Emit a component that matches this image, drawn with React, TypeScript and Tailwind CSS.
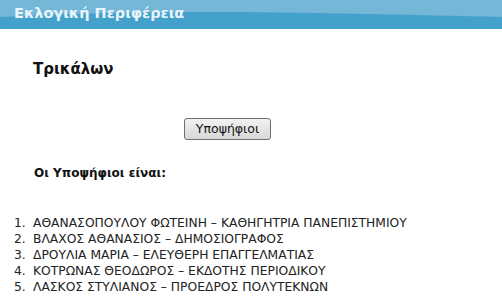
import React from 'react';

const candidates = [
  'ΑΘΑΝΑΣΟΠΟΥΛΟΥ ΦΩΤΕΙΝΗ – ΚΑΘΗΓΗΤΡΙΑ ΠΑΝΕΠΙΣΤΗΜΙΟΥ',
  'ΒΛΑΧΟΣ ΑΘΑΝΑΣΙΟΣ – ΔΗΜΟΣΙΟΓΡΑΦΟΣ',
  'ΔΡΟΥΛΙΑ ΜΑΡΙΑ – ΕΛΕΥΘΕΡΗ ΕΠΑΓΓΕΛΜΑΤΙΑΣ',
  'ΚΟΤΡΩΝΑΣ ΘΕΟΔΩΡΟΣ – ΕΚΔΟΤΗΣ ΠΕΡΙΟΔΙΚΟΥ',
  'ΛΑΣΚΟΣ ΣΤΥΛΙΑΝΟΣ – ΠΡΟΕΔΡΟΣ ΠΟΛΥΤΕΚΝΩΝ',
];

export default function App() {
  return (
    <div className="w-[502px] h-[296px] bg-white overflow-hidden font-['DejaVu_Sans',sans-serif] text-[#222]">
      {/* κεφαλίδα */}
      <div className="relative h-[29px] bg-[#43a1cc]">
        <svg className="absolute inset-0" width="502" height="29" viewBox="0 0 502 29" preserveAspectRatio="none">
          <path d="M0 0 H502 V17 C420 15 300 12 200 12 C120 12 60 14 0 17 Z" fill="#74b7d7" />
        </svg>
        <div className="relative pl-[14px] pt-[3px] text-[14.5px] font-bold text-[#e9f5fa] leading-[20px]">
          Εκλογική Περιφέρεια
        </div>
      </div>

      <div className="pl-[33px] pt-[31px] text-[15px] font-bold text-[#111] leading-[18px]">Τρικάλων</div>

      <div className="flex pt-[40px] pl-[184px]">
        <button className="w-[87px] h-[22px] rounded-[3px] border border-[#707070] bg-gradient-to-b from-[#f2f2f2] to-[#d8d8d8] text-[12.5px] text-[#111] leading-none">
          Υποψήφιοι
        </button>
      </div>

      <div className="pl-[34px] pt-[26px] text-[12px] font-bold text-[#111] leading-[15px]">Οι Υποψήφιοι είναι:</div>

      <ol className="pt-[34px] text-[12.3px] leading-[16px] text-[#222]">
        {candidates.map((c, i) => (
          <li key={c} className="flex">
            <span className="w-[33px] pl-[14px]">{i + 1}.</span>
            <span>{c}</span>
          </li>
        ))}
      </ol>
    </div>
  );
}
